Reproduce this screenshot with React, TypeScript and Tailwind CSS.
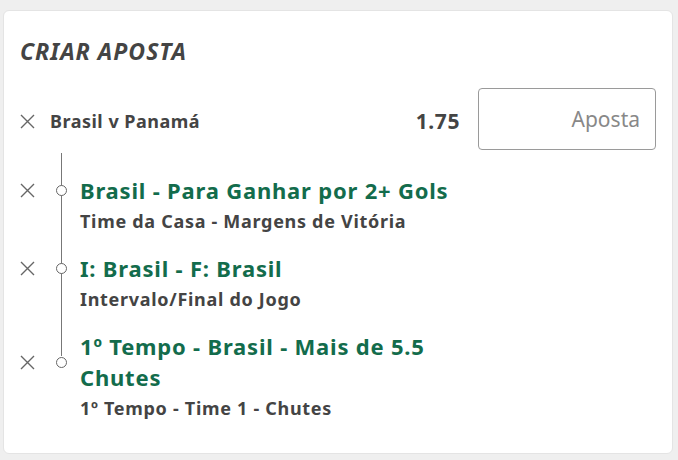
import React from 'react';

type Selection = {
  title: string;
  market: string;
};

const selections: Selection[] = [
  { title: 'Brasil - Para Ganhar por 2+ Gols', market: 'Time da Casa - Margens de Vitória' },
  { title: 'I: Brasil - F: Brasil', market: 'Intervalo/Final do Jogo' },
  { title: '1º Tempo - Brasil - Mais de 5.5 Chutes', market: '1º Tempo - Time 1 - Chutes' },
];

function CloseIcon() {
  return (
    <svg width="15" height="15" viewBox="0 0 15 15" className="shrink-0">
      <path d="M1 1L14 14M14 1L1 14" stroke="#666" strokeWidth="1.4" fill="none" />
    </svg>
  );
}

export default function App() {
  return (
    <div
      className="w-[678px] h-[460px] bg-[#efefef] pt-[10px] pl-[3px] pr-[5px] overflow-hidden"
      style={{ fontFamily: '"Noto Sans", "Open Sans", sans-serif' }}
    >
      <div className="h-[444px] bg-white rounded-md border border-[#e4e4e4] px-4 pt-[25px]">
        <h1 className="text-[23px] leading-[30px] font-bold italic text-[#444] tracking-[1px]">CRIAR APOSTA</h1>

        {/* event row */}
        <div className="mt-[22px] flex items-center h-[62px]">
          <div className="flex items-center gap-[15px] flex-1 pt-[5px]">
            <CloseIcon />
            <span className="text-[18px] font-bold text-[#444] tracking-[0.5px]">Brasil v Panamá</span>
          </div>
          <span className="text-[21px] font-bold text-[#444] mr-[18px] pt-[5px] tracking-[0.6px]">1.75</span>
          <input
            placeholder="Aposta"
            className="w-[178px] h-[62px] border border-[#9a9a9a] rounded-[4px] pl-4 pr-[15px] text-right text-[21px] text-[#444] placeholder:text-[#888] outline-none"
          />
        </div>

        {/* selections */}
        <div className="relative pt-[25px]">
          <div className="absolute left-[41px] top-[3px] h-[203px] w-px bg-[#777]" />
          {selections.map((s, i) => (
            <div key={s.title} className={i > 0 ? 'mt-[16px]' : ''}>
              <div className="flex items-center">
                <CloseIcon />
                <span className="relative ml-[21px] w-[11px] h-[11px] rounded-full border border-[#666] bg-white shrink-0" />
                <span className="ml-[13px] w-[400px] text-[22px] leading-[31px] font-bold text-[#136c4c] tracking-[0.8px]">
                  {s.title}
                </span>
              </div>
              <div className="ml-[60px] text-[18px] leading-[31px] font-bold text-[#444] tracking-[0.7px]">{s.market}</div>
            </div>
          ))}
          <div className="h-[2px]" />
        </div>
      </div>
    </div>
  );
}
